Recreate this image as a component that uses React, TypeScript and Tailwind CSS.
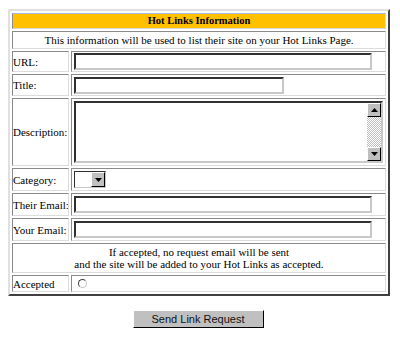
const serif = { fontFamily: '"Liberation Serif", "Times New Roman", serif' }

function Field({ width }: { width: string }) {
  return (
    <div
      className={`${width} h-[17px] bg-white border-2 border-t-[#303030] border-l-[#303030] border-r-[#c8c8c8] border-b-[#c8c8c8]`}
    ></div>
  )
}

function Label({ children }: { children: React.ReactNode }) {
  return (
    <td className="border border-t-[#8a8a8a] border-l-[#8a8a8a] border-r-[#dcdcdc] border-b-[#dcdcdc] px-0 align-middle whitespace-nowrap overflow-hidden">
      {children}
    </td>
  )
}

function Cell({
  children,
  className = "",
  span,
}: {
  children?: React.ReactNode
  className?: string
  span?: number
}) {
  return (
    <td
      colSpan={span}
      className={`border border-t-[#8a8a8a] border-l-[#8a8a8a] border-r-[#dcdcdc] border-b-[#dcdcdc] px-[2px] align-middle ${className}`}
    >
      {children}
    </td>
  )
}

function ScrollArrow({ up }: { up?: boolean }) {
  return (
    <div className="w-[14px] h-[14px] bg-[#c0c0c0] border border-t-white border-l-white border-r-black border-b-black flex items-center justify-center">
      <svg width="7" height="4" viewBox="0 0 7 4">
        {up ? <path d="M3.5 0 L7 4 L0 4 Z" fill="#000" /> : <path d="M0 0 L7 0 L3.5 4 Z" fill="#000" />}
      </svg>
    </div>
  )
}

export default function App() {
  return (
    <div className="w-[400px] h-[337px] bg-white text-black text-[11px] leading-[12px]" style={serif}>
      <div className="pt-[9px] pl-[8px]">
        <table className="w-[382px] table-fixed border-separate border-spacing-[2px] border-2 border-t-[#e0e0e0] border-l-[#e0e0e0] border-r-[#404040] border-b-[#404040]">
          <colgroup>
            <col className="w-[57px]" />
            <col />
          </colgroup>
          <tbody>
            <tr className="h-[16px]">
              <td
                colSpan={2}
                className="bg-[#ffc000] border border-t-[#9fb8e0] border-l-[#8a8a8a] border-r-[#dcdcdc] border-b-[#dcdcdc] text-center font-bold text-[10.5px]"
              >
                Hot Links Information
              </td>
            </tr>
            <tr className="h-[18px]">
              <Cell span={2} className="text-center">
                This information will be used to list their site on your Hot Links Page.
              </Cell>
            </tr>
            <tr className="h-[21px]">
              <Label>URL:</Label>
              <Cell>
                <Field width="w-[298px]" />
              </Cell>
            </tr>
            <tr className="h-[22px]">
              <Label>Title:</Label>
              <Cell>
                <Field width="w-[210px]" />
              </Cell>
            </tr>
            <tr className="h-[68px]">
              <Label>Description:</Label>
              <Cell>
                <div className="w-[309px] h-[62px] flex bg-white border-2 border-t-[#303030] border-l-[#303030] border-r-[#c8c8c8] border-b-[#c8c8c8]">
                  <div className="flex-1"></div>
                  <div className="w-[14px] flex flex-col">
                    <ScrollArrow up />
                    <div className="flex-1 bg-[repeating-conic-gradient(#c0c0c0_0_25%,#ffffff_0_50%)] bg-[length:2px_2px]"></div>
                    <ScrollArrow />
                  </div>
                </div>
              </Cell>
            </tr>
            <tr className="h-[23px]">
              <Label>Category:</Label>
              <Cell>
                <div className="w-[32px] h-[17px] flex bg-white border border-t-[#303030] border-l-[#303030] border-r-[#c8c8c8] border-b-[#c8c8c8]">
                  <div className="flex-1"></div>
                  <div className="w-[14px] bg-[#c0c0c0] border border-t-white border-l-white border-r-black border-b-black flex items-center justify-center">
                    <svg width="7" height="4" viewBox="0 0 7 4">
                      <path d="M0 0 L7 0 L3.5 4 Z" fill="#000" />
                    </svg>
                  </div>
                </div>
              </Cell>
            </tr>
            <tr className="h-[23px]">
              <Label>Their Email:</Label>
              <Cell>
                <Field width="w-[298px]" />
              </Cell>
            </tr>
            <tr className="h-[23px]">
              <Label>Your Email:</Label>
              <Cell>
                <Field width="w-[298px]" />
              </Cell>
            </tr>
            <tr className="h-[30px]">
              <Cell span={2} className="text-center">
                If accepted, no request email will be sent
                <br />
                and the site will be added to your Hot Links as accepted.
              </Cell>
            </tr>
            <tr className="h-[17px]">
              <Label>Accepted</Label>
              <Cell>
                <div className="ml-[4px] w-[9px] h-[9px] rounded-full bg-white border border-t-[#404040] border-l-[#404040] border-r-[#c8c8c8] border-b-[#c8c8c8]"></div>
              </Cell>
            </tr>
          </tbody>
        </table>
      </div>
      <div className="flex justify-center pt-[14px] pr-[4px]">
        <button
          className="w-[131px] h-[18px] bg-[#c0c0c0] border border-t-white border-l-white border-r-black border-b-black text-[11px] leading-none text-[#111]"
          style={{ fontFamily: '"Liberation Sans", Arial, sans-serif' }}
        >
          Send Link Request
        </button>
      </div>
    </div>
  )
}
